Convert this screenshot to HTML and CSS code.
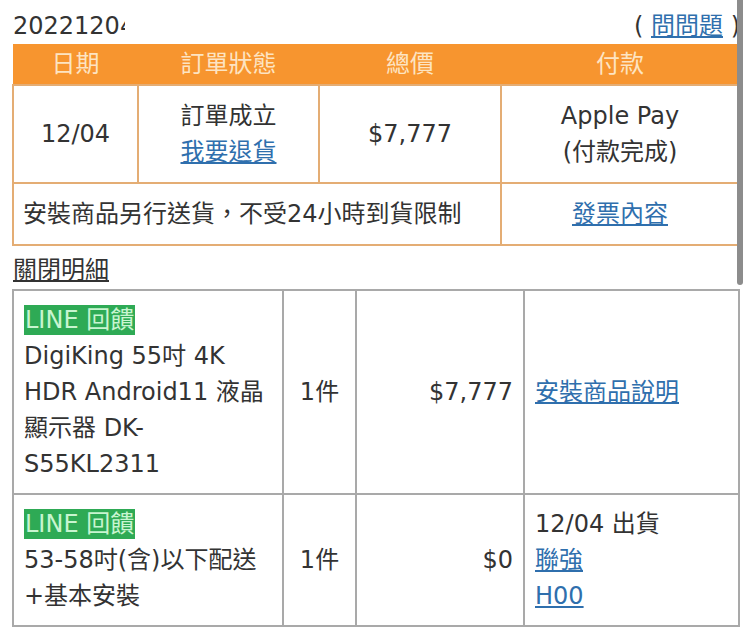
FILE: index.html
```html
<!DOCTYPE html>
<html>
    <head>
        <meta charset="utf-8">
        <title>訂單明細</title>
        <link rel="stylesheet" href="styles.css">
    </head>
    <body>
        <div class="scrollbar"></div>

        <div class="top">
            <span class="orderno">20221204</span>
            <span class="ask">( <a href="#">問問題</a> )</span>
        </div>

        <table class="order">
            <colgroup>
                <col style="width:125px">
                <col style="width:181px">
                <col style="width:182px">
                <col style="width:238px">
            </colgroup>
            <tr>
                <th>日期</th>
                <th>訂單狀態</th>
                <th>總價</th>
                <th>付款</th>
            </tr>
            <tr>
                <td>12/04</td>
                <td>訂單成立<br /><a href="#">我要退貨</a></td>
                <td>$7,777</td>
                <td>Apple Pay<br />(付款完成)</td>
            </tr>
            <tr>
                <td colspan="3" class="note">安裝商品另行送貨，不受24小時到貨限制</td>
                <td><a href="#">發票內容</a></td>
            </tr>
        </table>

        <div class="toggle"><a href="#">關閉明細</a></div>

        <table class="items">
            <colgroup>
                <col style="width:270px">
                <col style="width:73px">
                <col style="width:168px">
                <col style="width:215px">
            </colgroup>
            <tr>
                <td class="name">
                    <span class="badge">LINE 回饋</span><br />
                    DigiKing 55吋 4K HDR Android11 液晶顯示器 DK-S55KL2311
                </td>
                <td class="qty">1件</td>
                <td class="price">$7,777</td>
                <td class="info"><a href="#">安裝商品說明</a></td>
            </tr>
            <tr>
                <td class="name">
                    <span class="badge">LINE 回饋</span><br />
                    53-58吋(含)以下配送+基本安裝
                </td>
                <td class="qty">1件</td>
                <td class="price">$0</td>
                <td class="info">12/04 出貨<br /><a href="#">聯強</a><br /><a href="#">H00</a></td>
            </tr>
        </table>
    </body>
</html>
```

FILE: styles.css
```css
body {
    margin: 0;
    padding: 8px 12px 0 12px;
    background: #fff;
    color: #333;
    font-family: "DejaVu Sans", "Noto Sans CJK TC", sans-serif;
    font-size: 24px;
    line-height: 36px;
}

a {
    color: #2f6fad;
    text-decoration: underline;
}

.scrollbar {
    position: absolute;
    top: 0;
    left: 737px;
    width: 6px;
    height: 285px;
    background: #8c8c8c;
    border-radius: 0 0 3px 3px;
}

.top {
    display: flex;
    justify-content: space-between;
    height: 36px;
}

.orderno {
    display: inline-block;
    width: 112px;
    overflow: hidden;
    white-space: nowrap;
    padding-left: 1px;
}

.ask {
    white-space: nowrap;
    margin-right: -2px;
}

table {
    border-collapse: collapse;
    table-layout: fixed;
    width: 726px;
    font-size: 24px;
    line-height: 36px;
}

.order th {
    background: #f7952f;
    color: #fde4c2;
    font-weight: normal;
    padding: 2px 0;
    text-align: center;
}

.order td {
    border: 2px solid #e4ad74;
    text-align: center;
    padding: 12px 0;
}

.order td.note {
    text-align: left;
    padding-left: 9px;
}

.toggle {
    margin-top: 6px;
    padding-left: 1px;
}

.toggle a {
    color: #333;
}

.items {
    margin-top: 1px;
}

.items td {
    border: 2px solid #a9a9a9;
    padding: 11px 10px;
    vertical-align: middle;
}

.badge {
    background: #2eaa55;
    color: #c8f5d0;
    padding: 1px 1px;
}

.qty {
    text-align: center;
}

.price {
    text-align: right;
}

.info {
    padding-left: 12px;
}
```
